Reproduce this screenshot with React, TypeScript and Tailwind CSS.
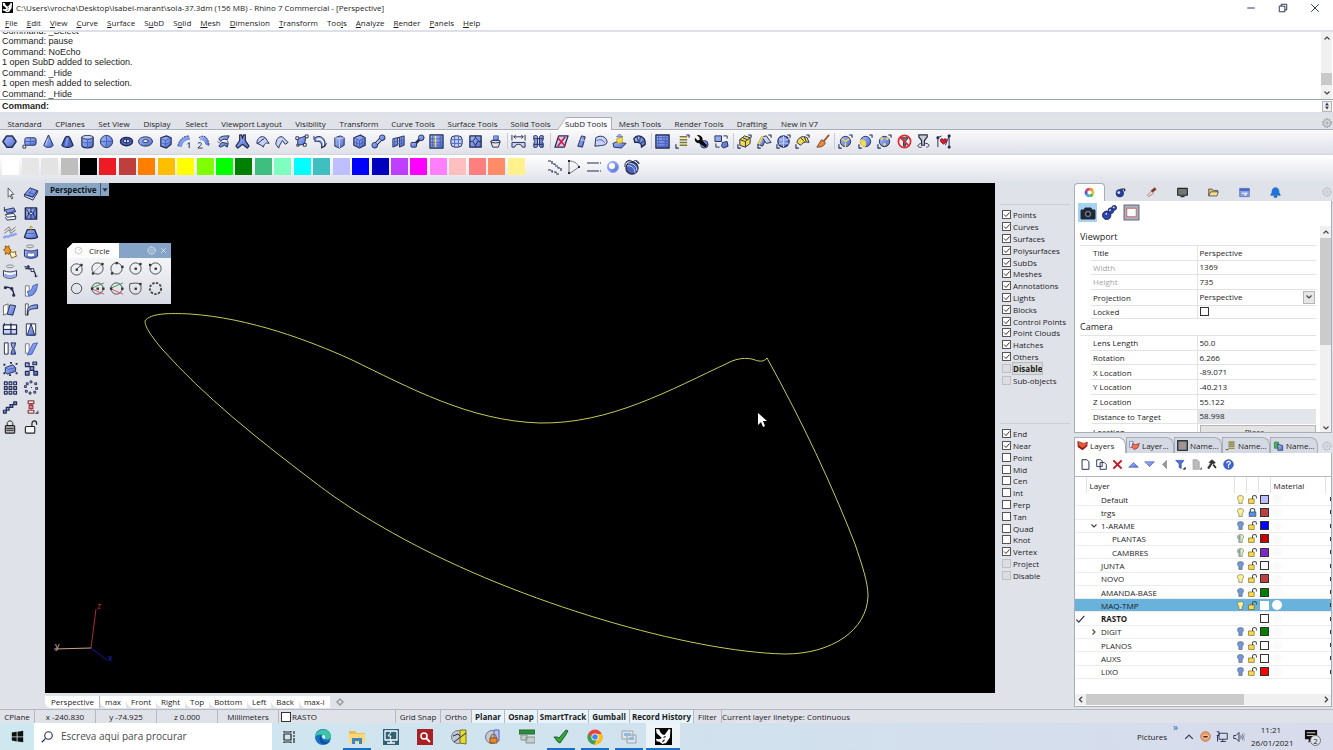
import React from "react";
import clsx from "clsx";

const B = "url(#steel)";
const L = "#c6d2fa";
const D = "#4a62bb";
const K = "#232c50";
const Y = "#f4dc4c";

interface IconProps {
  children: React.ReactNode;
  className?: string;
}

const SteelGradient = () => (
  <svg className="absolute size-0" aria-hidden="true">
    <defs>
      <linearGradient id="steel" x1="0" y1="0" x2="1" y2="1">
        <stop offset="0" stopColor="#a9bcf8" />
        <stop offset="0.5" stopColor="#7d97ea" />
        <stop offset="1" stopColor="#4e69cc" />
      </linearGradient>
    </defs>
  </svg>
);

const Icon: React.FC<IconProps> = ({ children, className }) => (
  <svg
    viewBox="0 0 16 16"
    className={clsx("shrink-0", className ?? "size-4")}
    fill="none"
    stroke={K}
    strokeWidth="1"
    strokeLinejoin="round"
    aria-hidden="true"
  >
    {children}
  </svg>
);

const corners = <path d="M1 11v4h3M12 1h3v3" strokeWidth="1.2" />;

const subdIcons: Record<string, React.ReactNode> = {
  face: <path d="M5 2h6l4 6-4 6H5L1 8z" fill={B} strokeWidth="1.6" />,
  plane: (
    <>
      <rect x="3" y="4" width="12" height="8" rx="2" fill={B} />
      <path d="M9 4v8M3 8h12" stroke={D} />
      <path d="M1 12h3v3H1z" fill="#fff" />
    </>
  ),
  cone: (
    <>
      <path d="M8 1l5 11c-1 3-9 3-10 0z" fill={B} />
      <path d="M7 5L5 12" stroke={L} />
    </>
  ),
  trunk: (
    <>
      <path d="M5.500 4c1-2 4-2 5 0L14 12c-2 3-10 3-12 0z" fill={D} strokeWidth="1.300" />
      <path d="M7 4l-2 9h4V4z" fill={B} stroke="none" />
    </>
  ),
  cylinder: (
    <>
      <path d="M2 3.500v9c1 3 11 3 12 0v-9z" fill={B} strokeWidth="1.300" />
      <ellipse cx="8" cy="3.500" rx="6" ry="2" fill={L} />
      <path d="M2 8c2 2 10 2 12 0M8 6v9" stroke={D} />
    </>
  ),
  sphere: (
    <>
      <circle cx="8" cy="8" r="6.500" fill={B} />
      <path d="M8 2v12M2 8h12" stroke={D} />
    </>
  ),
  ellipsoid: (
    <>
      <ellipse cx="8" cy="8" rx="6.500" ry="4.500" fill={D} strokeWidth="1.400" />
      <ellipse cx="8" cy="7.500" rx="3.500" ry="2" fill={L} />
      <path d="M8 5v5" />
    </>
  ),
  torus: (
    <>
      <ellipse cx="8" cy="8" rx="7.500" ry="5" fill={B} />
      <ellipse cx="8" cy="7.500" rx="3" ry="1.500" fill="#fff" />
    </>
  ),
  quadball: (
    <>
      <path d="M3 4l6-2 5 2v7l-5 4-6-2z" fill={B} strokeWidth="1.300" />
      <path d="M3 5l5 2 6-3M8 7v7M3 9l5 2 6-3" stroke={D} />
    </>
  ),
  sweep1: (
    <>
      <path d="M1 13C2 6 7 2 13 2l1 4C9 6 6 9 5 14" fill={B} stroke="none" />
      <path d="M1 13C2 6 7 2 13 2" strokeDasharray="2 1" />
      <path d="M11 11l2-2v6" />
    </>
  ),
  sweep2: (
    <>
      <path d="M4 4c5-4 9-1 10 9l-4-2C9 7 7 6 4 7" fill={B} stroke="none" />
      <path d="M3 4c5-4 10-1 11 8" strokeDasharray="2 1" />
      <path d="M2 10c3-2 5 0 3 2l-3 3h5" />
    </>
  ),
  loft: (
    <>
      <path d="M3 5c2-3 6-3 11-3l-2 4C8 5 6 6 5 8zM3 13l3-4 7 1-1 4-3-2-4 2z" fill={B} />
      <path d="M2 8l2 2m8-3l1 2" />
    </>
  ),
  multi: <path d="M5 1h2l1 4 1-4h2v6l4 6-2 2-5-4-5 4-2-2 4-6z" fill={B} strokeWidth="1.300" />,
  fill: (
    <>
      <path d="M2 10C2 4 7 1 11 4l4 6c-4-1-5 0-6 4-2-2-4-3-7-4z" fill={L} />
      <path d="M2 10c3 0 4-4 8-5" fill={B} />
    </>
  ),
  append: <path d="M2 11C2 6 5 2 9 3l6 6-3 2-3-4-3 5-1 3z" fill={L} />,
  quad: (
    <>
      <path d="M4 5l9-3-2 9-7 1z" fill={B} />
      <path d="M2 3h3v3H2zM12 1h3v3h-3zM10 10h3v3h-3zM3 11h2v2H3z" fill="#fff" />
    </>
  ),
  pipe: (
    <>
      <path d="M2 4c6-4 12 1 11 9l-4 2c1-6-2-8-7-7z" fill={B} />
      <path d="M4 6c4-2 8 1 7 7" stroke="#fff" strokeWidth="1.500" />
      <path d="M1 2v4M9 15l6-5" />
    </>
  ),
  box: (
    <>
      <path d="M3 4l6-2 4 2v8l-5 3-5-2z" fill={B} />
      <path d="M3 4l5 1 5-1M8 5v10" stroke={L} />
    </>
  ),
  boxgrid: (
    <>
      <path d="M2 4l7-3 5 3v8l-6 3-6-3z" fill={B} strokeWidth="1.300" />
      <path d="M2 4l6 3 6-3M8 7v8M2 8l6 3 6-3M5 6v7M11 6v7" stroke={D} />
    </>
  ),
  nodes: (
    <>
      <path d="M5 11l6-6" strokeWidth="4" />
      <circle cx="4" cy="12" r="3" fill={B} />
      <circle cx="12" cy="4" r="3" fill={B} />
      <path d="M6 10l4-4" stroke={L} strokeWidth="2" />
    </>
  ),
  wall: (
    <>
      <path d="M2 5l5-1v8l-5 2zM7 4l7-2v10l-5 2V4z" fill={B} />
      <path d="M2 9l12-3M4 5v8M11 3v10M2 12l12-3" stroke={D} />
    </>
  ),
  boxnodes: (
    <>
      <path d="M6 10l5-5" strokeWidth="3" />
      <rect x="1" y="9" width="6" height="5" rx="1" fill={B} />
      <circle cx="12" cy="4" r="3" fill={B} />
    </>
  ),
  mat: (
    <>
      <rect x="1" y="1" width="14" height="14" fill={B} strokeWidth="1.300" />
      <path d="M1 5h14M1 9h14M1 12h14M4 1v14M12 1v14" stroke={D} />
      <path d="M7 2v12" stroke={Y} strokeWidth="1.500" />
    </>
  ),
  roundgrid: (
    <>
      <rect x="2" y="2" width="12" height="12" rx="4" fill={L} />
      <path d="M6 2v12M10 2v12M2 6h12M2 10h12" stroke={D} />
    </>
  ),
  frame: (
    <>
      <rect x="2" y="2" width="12" height="12" fill={B} strokeWidth="1.400" />
      <path d="M8 4l3 3-3 5-3-4zM2 8h3M11 8h3M8 2v2M8 12v2" />
    </>
  ),
  bucket: (
    <>
      <path d="M3 8c1-2 9-2 10 0l-2 6H5z" fill="#e9e9ec" />
      <path d="M6 2h5v5H6z" fill={B} stroke={D} />
      <ellipse cx="8" cy="8" rx="5" ry="1.500" />
    </>
  ),
  bridge: (
    <>
      <path d="M1 1v6M15 1v6M3 3h10M5 1L3 3l2 2M11 1l2 2-2 2" />
      <path d="M1 9h14v5h-3c0-4-8-4-8 0H1z" fill={L} />
    </>
  ),
  stitch: (
    <>
      <path d="M3 2c3-1 4 0 4 2v8c0 2-1 3-4 2v-4l1-2-1-2zM13 2c-3-1-4 0-4 2v8c0 2 1 3 4 2v-4l-1-2 1-2z" fill={B} />
      <path d="M3 5h10M3 11h10" />
    </>
  ),
  crease: (
    <>
      <path d="M5 2h10l-4 12H1z" fill={L} strokeWidth="1.400" />
      <path d="M4 4l8 9M12 3L4 13" stroke="#dc1438" strokeWidth="1.800" />
    </>
  ),
  slab: (
    <>
      <path d="M8 2l4 1-3 11-5-1z" fill={B} />
      <path d="M7 6l5 1" stroke={L} />
    </>
  ),
  patch: (
    <>
      <path d="M3 4c4-3 11-2 12 4 0 4-3 4-13 5z" fill={L} />
      <path d="M4 7c5-2 7 0 9 3" stroke={D} />
    </>
  ),
  extrude: (
    <>
      <path d="M1 10l5-2 2 1 7 1-5 5-8-1z" fill={B} />
      <path d="M5 5l6-2v6l-5 1z" fill={Y} stroke="#c7a820" />
      <path d="M8 0l3 3H5z" fill={L} stroke={D} />
    </>
  ),
  bend: (
    <>
      <path d="M2 5c4-6 13-2 12 6l-4 3c1-4-3-6-7-5z" fill={B} strokeWidth="1.500" />
      <path d="M5 3l2 5M9 3l-1 5M13 7l-4 3" />
    </>
  ),
  grid: (
    <>
      <rect x="1" y="1" width="14" height="14" fill={B} strokeWidth="1.500" />
      <path d="M1 4h14M1 7h14M1 10h14M4 1v14M8 1c0 6 0 7 7 7M11 1v14M1 13h14" stroke={D} />
    </>
  ),
  list: (
    <>
      <path d="M5 3h8M5 6h8M5 9h8M5 12h8" stroke="#807825" strokeWidth="1.600" />
      {corners}
    </>
  ),
  wrench: (
    <>
      <circle cx="11" cy="11" r="4" fill={B} />
      <path d="M3 1l3 3v2L4 7 1 4c-1 5 3 6 5 6l6 4 2-2-5-5c1-4-2-6-6-6z" fill="#08090d" stroke="none" />
    </>
  ),
  convert: (
    <>
      <path d="M1 2h7v6H1zM9 9l5-1 1 5-5 2-2-2z" fill={B} />
      <path d="M10 2h4v3M2 10v4h4" />
    </>
  ),
  goldbox: (
    <>
      <path d="M3 6l5-4 6 2v6l-5 4-6-2z" fill={Y} />
      <path d="M3 6l6 2 5-4M9 8v6M6 4l5 2" />
      {corners}
    </>
  ),
  bicolor: (
    <>
      <path d="M1 11L5 3l5 1-4 9z" fill={B} />
      <path d="M5 3l5-1 5 7-5 1z" fill={L} />
      <path d="M6 2l-4 9" stroke={Y} strokeWidth="2" />
      {corners}
    </>
  ),
  ball: (
    <>
      <circle cx="8" cy="8" r="6" fill={B} strokeWidth="1.300" />
      <path d="M3 5c3 2 8 2 11 0M3 11c3-2 8-2 11 0M8 2v12" stroke={L} />
      {corners}
    </>
  ),
  goldarc: (
    <>
      <path d="M2 9c1-5 6-8 11-5l2 5c-4-1-7 0-9 3z" fill={Y} />
      <path d="M6 4l4 4M10 3l2 5" />
      {corners}
    </>
  ),
  broom: (
    <>
      <path d="M15 1L9 8" strokeWidth="2" stroke="#9d5528" />
      <path d="M7 6l4 3c-1 4-4 5-9 5z" fill="#e78b3f" stroke="#77401f" />
    </>
  ),
  tri1: (
    <>
      <circle cx="8" cy="8" r="5.500" fill={B} />
      <path d="M8 9v5M8 8L4 5M8 8l4-3" stroke={Y} strokeWidth="1.500" />
      {corners}
    </>
  ),
  tri2: (
    <>
      <circle cx="8" cy="8" r="5.500" fill={B} />
      <path d="M3 6l5 2v5c-4 1-6-3-5-7z" fill={Y} stroke={Y} />
      {corners}
    </>
  ),
  tri3: (
    <>
      <circle cx="8" cy="8" r="5.500" fill={B} />
      <circle cx="5" cy="5" r="1.500" fill={Y} stroke="none" />
      <circle cx="11" cy="5" r="1.500" fill={Y} stroke="none" />
      <circle cx="8" cy="11" r="1.500" fill={Y} stroke="none" />
      {corners}
    </>
  ),
  nofilter: (
    <>
      <path d="M4 4h8l-3 4v5H7V8z" fill="#777" />
      <circle cx="8" cy="8" r="6.500" stroke="#e02a2e" strokeWidth="1.800" />
      <path d="M3.500 3.500l9 9" stroke="#e02a2e" strokeWidth="1.800" />
    </>
  ),
  refilter: (
    <>
      <path d="M3 1h9v2L9 7v5H6V7L3 3z" fill="#ccc" strokeWidth="1.300" />
      <path d="M5 10c-5 2-3 5 1 4M10 10c5 0 5 4 1 4" />
    </>
  ),
  heart: (
    <>
      <path d="M2 14V4l4-2M14 2v12M10 12l4-10" />
      <path d="M8 11L5 8c-1-4 2-3 3-2 1-1 4-2 3 2z" fill="#d91a2c" stroke="#8e0f18" />
      <path d="M1 3h2v2H1zM13 13h2v2h-2zM13 1h2v2h-2z" fill={K} />
    </>
  ),
};

const subdGroups = [
  {
    width: "w-[505px]",
    tools: [
      "face", "plane", "cone", "trunk", "cylinder", "sphere", "ellipsoid", "torus", "quadball",
      "sweep1", "sweep2", "loft", "multi", "fill", "append", "quad", "pipe", "box", "boxgrid",
      "nodes", "wall", "boxnodes", "mat", "roundgrid", "frame", "bucket",
    ],
  },
  { width: "w-[39px]", tools: ["bridge", "stitch"] },
  { width: "w-[97px]", tools: ["crease", "slab", "patch", "extrude", "bend"] },
  { width: "w-[78px]", tools: ["grid", "list", "wrench", "convert"] },
  { width: "w-[97px]", tools: ["goldbox", "bicolor", "ball", "goldarc", "broom"] },
  { width: "w-[117px]", tools: ["tri1", "tri2", "tri3", "nofilter", "refilter", "heart"] },
];

const swatches = [
  "bg-white", "bg-[#e6e6e6]", "bg-[#e3e3e3]", "bg-[#bebebe]", "bg-black", "bg-[#ed1c24]",
  "bg-[#bf3f3f]", "bg-[#ff7f00]", "bg-[#ffbf00]", "bg-[#ffff00]", "bg-[#7fff00]", "bg-[#00ff00]",
  "bg-[#007f00]", "bg-[#3fbf7f]", "bg-[#7fffbf]", "bg-[#00ffff]", "bg-[#3fbfbf]", "bg-[#bfbfff]",
  "bg-[#0000ff]", "bg-[#0000bf]", "bg-[#bf3fff]", "bg-[#ff00ff]", "bg-[#ff7fff]", "bg-[#ffbfbf]",
  "bg-[#ff7f7f]", "bg-[#ff8c66]", "bg-[#fff28c]",
];

const menus: [string, string, string][] = [
  ["", "F", "ile"],
  ["", "E", "dit"],
  ["", "V", "iew"],
  ["", "C", "urve"],
  ["", "S", "urface"],
  ["S", "u", "bD"],
  ["S", "o", "lid"],
  ["", "M", "esh"],
  ["", "D", "imension"],
  ["", "T", "ransform"],
  ["Too", "l", "s"],
  ["", "A", "nalyze"],
  ["", "R", "ender"],
  ["", "P", "anels"],
  ["", "H", "elp"],
];

const history = [
  "Command: _Select",
  "Command: pause",
  "Command: NoEcho",
  "1 open SubD added to selection.",
  "Command: _Hide",
  "1 open mesh added to selection.",
  "Command: _Hide",
];

const toolTabs = [
  { label: "Standard", width: "w-[47px]" },
  { label: "CPlanes", width: "w-[44px]" },
  { label: "Set View", width: "w-[44px]" },
  { label: "Display", width: "w-[42px]" },
  { label: "Select", width: "w-[37px]" },
  { label: "Viewport Layout", width: "w-[73px]" },
  { label: "Visibility", width: "w-[45px]" },
  { label: "Transform", width: "w-[52px]" },
  { label: "Curve Tools", width: "w-[56px]" },
  { label: "Surface Tools", width: "w-[63px]" },
  { label: "Solid Tools", width: "w-[53px]" },
  { label: "SubD Tools", width: "w-[55px]" },
  { label: "Mesh Tools", width: "w-[56px]" },
  { label: "Render Tools", width: "w-[62px]" },
  { label: "Drafting", width: "w-[44px]" },
  { label: "New in V7", width: "w-[51px]" },
];

const RhinoMark = ({ className }: { className: string }) => (
  <Icon className={className}>
    <rect width="16" height="16" fill="#050505" stroke="none" />
    <path
      d="M1 1l3 .5 1 2.500 2 2 2 .5L13 1l1.500.5L14 9l-3.500 5-3.500 1-3-2-2.500-.5L1 10l3 .5 2.500-1L4 7 1.500 5z"
      fill="#fff"
      stroke="none"
    />
    <path d="M8 9l2-1M7 13l2-2" stroke="#050505" />
  </Icon>
);

const Gear = ({ className }: { className: string }) => (
  <Icon className={className}>
    <g stroke="currentColor">
      <circle cx="8" cy="8" r="5.500" />
      <circle cx="8" cy="8" r="2" />
      <circle cx="8" cy="8" r="7" strokeDasharray="2.400 2" strokeWidth="1.500" />
    </g>
  </Icon>
);

const Chevron = ({ turn, className }: { turn?: string; className?: string }) => (
  <Icon className={clsx(className ?? "size-2", turn)}>
    <path d="M3 5l5 5 5-5" stroke="#444" strokeWidth="2.200" />
  </Icon>
);

const TitleBar = () => (
  <header className="bg-white">
    <div className="flex h-[15px] items-center justify-between">
      <div className="flex items-center gap-[3px] pl-0.5">
        <RhinoMark className="size-[11px]" />
        <h1>C:\Users\vrocha\Desktop\isabel-marant\sola-37.3dm (156 MB) - Rhino 7 Commercial - [Perspective]</h1>
      </div>
      <div className="flex pr-0.5">
        <button aria-label="Minimize" className="flex w-8 justify-center">
          <Icon className="size-2.5">
            <path d="M2 8h12" strokeWidth="1.500" />
          </Icon>
        </button>
        <button aria-label="Restore" className="flex w-8 justify-center">
          <Icon className="size-2.5">
            <path d="M2 5h9v9H2zM5 5V2h9v9h-3" strokeWidth="1.500" />
          </Icon>
        </button>
        <button aria-label="Close" className="flex w-8 justify-center">
          <Icon className="size-2.5">
            <path d="M2 2l12 12M14 2L2 14" strokeWidth="1.500" />
          </Icon>
        </button>
      </div>
    </div>
    <nav className="flex h-[15px] items-center gap-[9px] pl-[5px]">
      {menus.map(([before, key, after]) => (
        <button key={before + key + after}>
          {before}
          <span className="underline underline-offset-1">{key}</span>
          {after}
        </button>
      ))}
    </nav>
  </header>
);

const CommandArea = () => (
  <section className="border-y-2 border-[#dde0e8] bg-white font-['Liberation_Sans',sans-serif] text-[9px]">
    <div className="flex h-[68px] border-b border-[#9aa8a8]">
      <div className="flex flex-1 flex-col justify-end overflow-hidden pl-0.5">
        <div className="flex h-[73px] shrink-0 flex-col">
          {history.map((line, i) => (
            <p key={i} className="flex-1 leading-[10px]">
              {line}
            </p>
          ))}
        </div>
      </div>
      <div className="mr-px flex w-[11px] flex-col items-center bg-[#f0f0f0] py-0.5">
        <Chevron turn="rotate-180" />
        <div className="mt-auto h-3 w-full bg-[#c9c9c9]" />
        <Chevron className="mt-1 size-2" />
      </div>
    </div>
    <div className="flex h-[12px] items-center pr-px pl-0.5">
      <label htmlFor="command" className="font-bold">
        Command:
      </label>
      <input id="command" className="h-3 flex-1 outline-none" />
      <div className="flex h-[11px] w-2.5 flex-col border border-[#b5b5b5] bg-[#eee]">
        <Icon className="h-1 w-2">
          <path d="M2 13h12L8 3z" fill={K} />
        </Icon>
        <Icon className="h-1 w-2">
          <path d="M2 3h12L8 13z" fill={K} />
        </Icon>
      </div>
    </div>
  </section>
);

const ToolTabs = () => (
  <nav className="flex h-[16px] items-end border-b border-[#a9adb6] pl-px whitespace-nowrap">
    {toolTabs.map((tab) =>
      tab.label === "SubD Tools" ? (
        <button
          key={tab.label}
          className={clsx(
            "-mb-px bg-[#a9adb6] pt-px pr-px [clip-path:polygon(9px_0,100%_0,100%_100%,0_100%)]",
            tab.width,
          )}
        >
          <span className="block bg-[#fafafc] pl-1 leading-3 [clip-path:polygon(9px_0,100%_0,100%_100%,1px_100%)]">
            {tab.label}
          </span>
        </button>
      ) : (
        <button key={tab.label} className={clsx("leading-[11px]", tab.width)}>
          {tab.label}
        </button>
      ),
    )}
    <button aria-label="Toolbar options" className="mr-px mb-px ml-auto text-[#85878c]">
      <Gear className="size-2.5" />
    </button>
  </nav>
);

const SubdToolbar = () => (
  <div className="flex h-[24px] items-center bg-linear-to-b from-[#fafafc] to-[#dfe1e9] pb-0.5">
    {subdGroups.map((group, i) => (
      <React.Fragment key={i}>
        {i > 0 && (
          <div className="flex h-4 w-1 justify-center">
            <div className="w-px bg-[#c9ccd5]" />
          </div>
        )}
        <div className={clsx("flex", group.width)}>
          {group.tools.map((tool) => (
            <button key={tool} aria-label={tool} className="flex flex-1 justify-center">
              <Icon className="size-[15px]">{subdIcons[tool]}</Icon>
            </button>
          ))}
        </div>
      </React.Fragment>
    ))}
  </div>
);

const colorTools: Record<string, React.ReactNode> = {
  steps: <path d="M1 2h4v3h3v2h3v2h3v3M1 11h4v2h4v2h4" strokeDasharray="3 1" strokeWidth="1.200" />,
  triangle: (
    <>
      <path d="M3 2c5 0 8 2 10 6l-10 7z" stroke="#777" />
      <path d="M2 1h2v2H2zM2 13h2v2H2zM12 7h2v2h-2z" fill={K} stroke="none" />
    </>
  ),
  lines: <path d="M1 4h14M1 12h14" strokeDasharray="12 1" />,
  pearl: (
    <>
      <circle cx="8" cy="8" r="5.500" fill={B} stroke="#8ea6f2" />
      <circle cx="7" cy="7" r="3" fill="#fff" stroke="none" />
    </>
  ),
  globe: (
    <>
      <circle cx="8" cy="9" r="6" fill={D} strokeWidth="1.400" />
      <path d="M3 7c4-1 8 2 8 7M4 4c4 0 9 2 9 8" stroke={L} />
      <path d="M1 8C0 2 6 0 9 3c2-3 6-1 6 2M2 3l4-2M12 2l3 3" />
    </>
  ),
};

const ColorBar = () => (
  <div className="flex h-[29px] items-center border-t border-[#d2d5de] bg-linear-to-b from-white to-[#dfe1e9] pb-[5px] pl-px">
    <div className="flex w-[525px]">
      {swatches.map((color) => (
        <button key={color} aria-label="Layer color" className="flex flex-1 justify-center">
          <span className={clsx("size-[17px]", color)} />
        </button>
      ))}
    </div>
    <div className="ml-[19px] flex w-[97px]">
      {Object.entries(colorTools).map(([name, art]) => (
        <button key={name} aria-label={name} className="flex flex-1 justify-center">
          <Icon className="size-4">{art}</Icon>
        </button>
      ))}
    </div>
  </div>
);

const sideIcons: React.ReactNode[] = [
  <path d="M6 2v10l2-2 2 4 1-1-2-4h3z" fill="#fff" stroke="#555" />,
  <>
    <path d="M1 9l6-7 8 3-5 7z" fill={B} />
    <path d="M4 6l8 3M9 3l-4 8" stroke={D} />
    <path d="M1 9v2l9 4 5-8V5l-5 7z" fill={L} />
  </>,
  <>
    <path d="M3 9l9-1 2 3-9 1zM3 12l2 3 9-1v-3" fill="#fff" />
    <path d="M3 4l9-2 2 4-9 2z" fill={B} />
    <path d="M2 1v5" />
  </>,
  <>
    <rect x="2" y="2" width="12" height="12" fill={B} strokeWidth="1.500" />
    <path d="M3 3l3 5-3 5M13 3l-3 5 3 5M8 2v12M5 8h6" />
    <circle cx="8" cy="8" r="1.500" fill="#fff" />
  </>,
  <>
    <path d="M2 6l5-4 2 4 5-4M2 9l5-4 2 4 5-4" stroke="#777" />
    <path d="M1 14c3-4 4 0 6-2s4 0 8-3" stroke="#8ea3ea" strokeWidth="2.500" />
  </>,
  <>
    <path d="M4 5h8l3 8c-3 2-11 2-14 0z" fill={B} strokeWidth="1.400" />
    <path d="M8 7V1M6 3l2-2 2 2" stroke="#b49a22" />
    <path d="M4 9h8" stroke={D} />
  </>,
  <>
    <path d="M3 2l2 1 2-1v3l2 1-1 2-1 3-2-1-2 1V8L1 6l2-1z" fill="#f09a1d" stroke="#8a5210" />
    <path d="M9 8l2 1 3-1v3l1 2-3 1-2 1-1-2-1-3z" fill="#fff5cf" stroke="#8a5210" />
  </>,
  <>
    <path d="M1 6c4 2 10 2 14 0v7c-4 3-10 3-14 0z" fill={B} />
    <path d="M4 9c2 1 6 1 8 0v4c-2 1-6 1-8 0z" fill="#fff" stroke={D} />
    <ellipse cx="7" cy="2.500" rx="4" ry="1.500" stroke="#888" />
  </>,
  <>
    <path d="M1 7c4 2 10 2 14 0v6c-4 3-10 3-14 0z" fill="#f2f5ff" />
    <path d="M2 11c4 3 8 3 12 0" stroke="#8ea3ea" strokeWidth="2.500" />
    <ellipse cx="8" cy="2.500" rx="4" ry="1.500" stroke="#888" />
  </>,
  <>
    <path d="M1 3h6M5 1v4M2 5c6-1 11 2 11 9" strokeWidth="1.400" />
    <path d="M8 5h3v3H8zM12 13h3" fill="#fff" />
  </>,
  <>
    <path d="M3 5c5-2 9 3 9 7" strokeWidth="1.500" />
    <path d="M2 4h2v2H2zM9 5h2v2H9zM11 12h2v2h-2z" fill={K} />
  </>,
  <>
    <path d="M2 3h4v11H2z" fill="#fff" stroke="#777" />
    <path d="M10 3l5-2c-1 8-3 12-9 13l-2-5c4 0 5-2 6-6z" fill={B} stroke={D} />
  </>,
  <>
    <path d="M1 4l5-2v10l-5 2z" fill="#fff" stroke="#666" />
    <path d="M8 3l6 1-3 10-6-1z" fill={B} />
  </>,
  <>
    <path d="M2 2h3v12H2z" fill="#fff" stroke="#555" />
    <path d="M4 14c0-6 4-7 11-7V3C8 3 5 5 4 9z" fill={B} />
  </>,
  <>
    <path d="M1 3h14v10H1zM1 8h14M9 3v10" fill={L} strokeWidth="1.300" />
    <path d="M2 4h6v3H2zM10 4h4v3h-4z" fill="#fff" stroke="none" />
    <path d="M2 1v3M9 1v3" />
  </>,
  <>
    <path d="M3 2h10v12H3z" fill="#fff" />
    <path d="M8 2l4 12H4z" fill={B} />
  </>,
  <>
    <path d="M2 2h4v12H2z" fill="#fff" />
    <path d="M9 2h5l-1 4-1 2 1 2 1 4H9l1-4 1-2-1-2z" fill={B} />
  </>,
  <>
    <path d="M2 3h4v10H2z" fill="#fff" stroke="#777" />
    <path d="M10 3l5-1-6 12-5 1z" fill={B} stroke={D} />
  </>,
  <>
    <path d="M3 7l8-3 3 3v4l-9 3-2-2z" fill={B} />
    <path d="M3 7l3 2 8-2" stroke={D} />
    <path d="M1 4h2M1 13h2M14 3h2M8 2h2M14 13h2M7 15h2" strokeWidth="2" />
  </>,
  <path d="M2 2h4v4H2zM7 6h4v4H7zM2 11h4v4H2zM11 11h4v4h-4zM10 1h4v3h-4z" fill={B} strokeWidth="1.200" />,
  <path
    d="M2 2h3v3H2zM7 2h3v3H7zM12 2h3v3h-3zM2 7h3v3H2zM7 7h3v3H7zM12 7h3v3h-3zM2 12h3v3H2zM7 12h3v3H7zM12 12h3v3h-3z"
    fill={L}
    strokeWidth="1.200"
  />,
  <path
    d="M7 1h2v2H7zM12 3h2v2h-2zM13 8h2v2h-2zM11 12h2v2h-2zM6 13h2v2H6zM2 11h2v2H2zM1 6h2v2H1zM3 3h2v2H3zM8 8h1"
    fill={L}
  />,
  <path d="M1 12h3v3H1zM4 9h3v3H4zM8 6h3v3H8zM12 3h3v3h-3z" fill={B} strokeWidth="1.300" />,
  <>
    <path d="M5 2h6v3H5zM6 7h4v3H6zM5 12h6v3H5z" fill="#fff" stroke="#8e3a44" strokeWidth="1.300" />
    <path d="M8 4v9M6 6h4" stroke="#c43a44" />
    <path d="M16 16v-4l-4 4z" fill="#555" stroke="none" />
  </>,
  <>
    <rect x="3" y="7" width="10" height="8" rx="1" fill="#b9b9b9" stroke="#222" strokeWidth="1.200" />
    <path d="M5 7V5c0-4 6-4 6 0v2M4 10h8M4 12h8" stroke="#222" />
  </>,
  <>
    <rect x="2" y="8" width="10" height="7" rx="1" fill="#f7f7f7" stroke="#222" strokeWidth="1.200" />
    <path d="M9 8V5c0-4 5-4 5 0v1" stroke="#222" strokeWidth="1.300" />
  </>,
];

const Sidebar = () => (
  <aside className="w-[45px] shrink-0 pr-1">
    <div className="grid h-[253px] grid-cols-2 items-center pt-px">
      {sideIcons.map((art, i) => (
        <button key={i} aria-label={`Tool ${i + 1}`} className="flex justify-center">
          <Icon className="h-[15px] w-4">{art}</Icon>
        </button>
      ))}
    </div>
  </aside>
);

const handle = (x: number, y: number) => (
  <rect x={x - 1} y={y - 1} width="2.500" height="2.500" fill="#333" stroke="none" />
);

const circleTools: React.ReactNode[] = [
  <>
    <circle cx="7" cy="9" r="6" />
    <path d="M7 9l5-5" />
    {handle(7, 9)}
    {handle(12, 4)}
  </>,
  <>
    <circle cx="8" cy="8" r="6" />
    <path d="M3 13L13 3" stroke="#aaa" />
    {handle(3, 13)}
    {handle(13, 3)}
  </>,
  <>
    <circle cx="8" cy="8" r="6" />
    {handle(8, 2)}
    {handle(14, 6)}
    {handle(3, 13)}
  </>,
  <>
    <circle cx="8" cy="8" r="6" />
    {handle(8, 8)}
    {handle(13, 3)}
  </>,
  <>
    <circle cx="8" cy="8" r="6" />
    {handle(8, 8)}
    {handle(2, 4)}
  </>,
  <circle cx="7" cy="8" r="5.500" />,
  <>
    <circle cx="8" cy="8" r="6" />
    <path d="M1 8L15 2" stroke="#3c9b4c" />
    <path d="M1 8l14 6" stroke="#e04a54" />
    {handle(8, 8)}
    {handle(2, 8)}
    {handle(14, 8)}
  </>,
  <>
    <circle cx="8" cy="8" r="6" />
    <path d="M1 8L15 2" stroke="#3c9b4c" />
    <path d="M1 8l14 6" stroke="#e04a54" />
    {handle(2, 8)}
    {handle(14, 8)}
  </>,
  <>
    <path d="M2 3c4-1 8-1 11 0 2 5 1 11-5 11S1 8 2 3z" />
    {handle(8, 8)}
    {handle(13, 3)}
  </>,
  <circle cx="8" cy="8" r="6" strokeDasharray="2.500 1.500" strokeWidth="2" />,
];

const CirclePalette = () => (
  <section className="absolute top-[60px] left-[22px] w-[104px] bg-linear-to-b from-[#fdfdfe] to-[#d9dce5] pb-2 [clip-path:polygon(6px_0,100%_0,100%_100%,0_100%,0_6px)]">
    <header className="flex h-[15px] items-center bg-[#85a4c8]">
      <div className="flex h-full w-[52px] items-center gap-1.5 bg-[#fdfdfe] pl-[7px]">
        <Icon className="size-[9px]">
          <g stroke="#aaa">
            <circle cx="8" cy="8" r="6" />
            <path d="M8 8l4-4" />
          </g>
        </Icon>
        Circle
      </div>
      <button aria-label="Palette options" className="ml-auto text-[#e6ebf2]">
        <Gear className="size-[9px]" />
      </button>
      <button aria-label="Close palette" className="px-1">
        <Icon className="size-[7px]">
          <path d="M3 3l10 10M13 3L3 13" stroke="#e6ebf2" strokeWidth="2" />
        </Icon>
      </button>
    </header>
    <div className="grid w-[98px] grid-cols-5 gap-y-[5px] pt-[3px] pl-px">
      {circleTools.map((art, i) => (
        <button key={i} aria-label={`Circle ${i + 1}`} className="flex justify-center">
          <Icon className="size-[15px]">
            <g stroke="#444">{art}</g>
          </Icon>
        </button>
      ))}
    </div>
  </section>
);

const Viewport = () => (
  <div className="relative min-h-0 flex-1 bg-black">
    <svg viewBox="0 0 950 510" className="size-full" fill="none" role="img" aria-label="Perspective viewport">
      <path
        d="M100 138C105 130 125 130 145 131C205 135 265 158 305 176C365 205 425 238 495 240C565 241 625 207 685 179C693 175 701 175 707 176C713 178 718 180 722 175C757 238 787 302 810 361C817 382 823 399 823 413C822 447 787 471 740 471C645 469 475 420 355 354C315 332 290 315 268 298C210 254 160 214 117 166C102 148 100 142 100 138Z"
        stroke="#c5ca58"
      />
      <path d="M46 465L51 426" stroke="#a52f31" />
      <path d="M9 466l37-1" stroke="#c7a58c" />
      <path d="M46 465l16 12" stroke="#15159a" />
      <path d="M713 230v12l3-3 2 5 2-1-2-5h4z" fill="#fff" />
      <g className="font-['Liberation_Sans',sans-serif] text-[9px]">
        <text x="52" y="426" fill="#a52f31">
          z
        </text>
        <text x="10" y="466" fill="#d3b29a">
          y
        </text>
        <text x="63" y="478" fill="#2020c0">
          x
        </text>
      </g>
    </svg>
    <div className="absolute top-0 left-0 flex h-[13px] items-center bg-[#8aa5c2] text-[#0c1620]">
      <span className="pr-1 pl-[5px] font-bold">Perspective</span>
      <button aria-label="Viewport menu" className="flex h-full items-center border-l border-[#47586b] px-px">
        <Icon className="size-[6px]">
          <path d="M2 4h12l-6 8z" fill={K} />
        </Icon>
      </button>
    </div>
    <CirclePalette />
  </div>
);

const viewTabs = ["Perspective", "max", "Front", "Right", "Top", "Bottom", "Left", "Back", "max-i"];

const ViewTabs = () => (
  <nav className="flex h-[16px] items-start pt-[3px]">
    {viewTabs.map((tab, i) => (
      <button
        key={tab}
        className={clsx(
          "h-3 bg-white px-[5px] leading-3",
          i === 0 ? "rounded-bl-md border-r border-[#b5b8c0] pl-1.5" : "rounded-bl-lg",
        )}
      >
        {tab}
      </button>
    ))}
    <button aria-label="New viewport" className="ml-1.5 pt-0.5">
      <Icon className="size-2">
        <path d="M6 2h4v4h4v4h-4v4H6v-4H2V6h4z" stroke="#777" strokeWidth="1.500" />
      </Icon>
    </button>
  </nav>
);

interface TickProps {
  label: string;
  checked?: boolean;
  disabled?: boolean;
  bold?: boolean;
}

const Tick: React.FC<TickProps> = ({ label, checked, disabled, bold }) => (
  <label className="flex flex-1 items-center gap-0.5">
    <span className="relative flex">
      <input
        type="checkbox"
        defaultChecked={checked}
        disabled={disabled}
        className={clsx(
          "peer size-[9px] appearance-none border",
          disabled ? "border-[#bfc1c6] bg-[#dcdde0]" : "border-[#555] bg-white",
        )}
      />
      <svg
        viewBox="0 0 9 9"
        className="pointer-events-none invisible absolute inset-0 peer-checked:visible"
        fill="none"
        stroke="#333"
      >
        <path d="M2 4.500l2 2L7.500 2.500" />
      </svg>
    </span>
    <span className={clsx("leading-[11px]", bold && "bg-[#d7dad9] font-bold outline outline-[#b9bcbd]")}>
      {label}
    </span>
  </label>
);

const filters = [
  "Points", "Curves", "Surfaces", "Polysurfaces", "SubDs", "Meshes", "Annotations", "Lights",
  "Blocks", "Control Points", "Point Clouds", "Hatches", "Others",
];
const snaps = ["End", "Near", "Point", "Mid", "Cen", "Int", "Perp", "Tan", "Quad", "Knot", "Vertex"];
const activeSnaps = ["End", "Near", "Vertex"];

const SnapPanel = () => (
  <aside className="w-[79px] shrink-0 pt-[21px] pr-1 pl-[5px]">
    <fieldset className="flex h-[182px] flex-col border-t border-[#cdd0d8] pt-1 pl-0.5">
      {filters.map((name) => (
        <Tick key={name} label={name} checked />
      ))}
      <Tick label="Disable" disabled bold />
      <Tick label="Sub-objects" disabled />
    </fieldset>
    <fieldset className="mt-[37px] flex h-[158px] flex-col border-t border-[#cdd0d8] pt-1 pl-0.5">
      {snaps.map((name) => (
        <Tick key={name} label={name} checked={activeSnaps.includes(name)} />
      ))}
      <Tick label="Project" disabled />
      <Tick label="Disable" disabled />
    </fieldset>
  </aside>
);

const panelTabs: React.ReactNode[] = [
  <g strokeWidth="4">
    <path d="M8 3a5 5 0 0 1 4.300 2.500" stroke="#f08a24" />
    <path d="M12.300 5.500a5 5 0 0 1 0 5" stroke="#e2c72c" />
    <path d="M12.300 10.500A5 5 0 0 1 8 13" stroke="#4fb94f" />
    <path d="M8 13a5 5 0 0 1-4.300-2.500" stroke="#2fa9d4" />
    <path d="M3.700 10.500a5 5 0 0 1 0-5" stroke="#5b4fd0" />
    <path d="M3.700 5.500A5 5 0 0 1 8 3" stroke="#e0356e" />
  </g>,
  <>
    <circle cx="7" cy="9" r="5.500" fill="#1f3fa5" />
    <circle cx="5.500" cy="8" r="2" fill="#dfe8ff" stroke="none" />
    <path d="M8 3h6v3" strokeWidth="2" />
  </>,
  <>
    <path d="M14 2L8 7" stroke="#7c3a2d" strokeWidth="4" />
    <path d="M8 6l3 3-7 5-2-2z" fill="#f2d9d3" stroke="#8e6258" />
  </>,
  <>
    <rect x="1" y="2" width="14" height="10" fill="#6e7b75" stroke="#222" strokeWidth="1.600" />
    <path d="M5 14h6" strokeWidth="1.800" />
  </>,
  <>
    <path d="M1 13V3h5l2 2h6v3" fill="#e8c457" />
    <path d="M1 13l3-6h11l-2 6z" fill="#fbe08a" />
  </>,
  <>
    <rect x="1" y="2" width="14" height="12" fill="#88a0e4" stroke={D} />
    <path d="M1 4h14" stroke={D} strokeWidth="3" />
    <path d="M4 9h4M9 8v5M12 8l-2 3" stroke="#fff" strokeWidth="1.500" />
  </>,
  <path d="M8 1c5 0 5 5 5 7l2 4H1l2-4c0-2 0-7 5-7zM6 13h4v2H6z" fill="#1c78dc" stroke="#175fae" />,
];

interface PropRow {
  name: string;
  value: string;
  dim?: boolean;
}

const viewportRows: PropRow[] = [
  { name: "Title", value: "Perspective" },
  { name: "Width", value: "1369", dim: true },
  { name: "Height", value: "735", dim: true },
  { name: "Projection", value: "Perspective" },
  { name: "Locked", value: "" },
];

const cameraRows: PropRow[] = [
  { name: "Lens Length", value: "50.0" },
  { name: "Rotation", value: "6.266" },
  { name: "X Location", value: "-89.071" },
  { name: "Y Location", value: "-40.213" },
  { name: "Z Location", value: "55.122" },
  { name: "Distance to Target", value: "58.998" },
  { name: "Location", value: "Place..." },
];

const PropTable = ({ title, rows, height }: { title: string; rows: PropRow[]; height: string }) => (
  <section className="pl-[5px]">
    <h2 className="h-[17px] border-b border-[#e3e3e3] text-[9px] leading-4">{title}</h2>
    <table className={clsx("w-full border-collapse", height)}>
      <tbody>
        {rows.map((row) => (
          <tr key={row.name}>
            <th className="w-[11px]" />
            <th
              scope="row"
              className={clsx(
                "w-[106px] border-r border-b border-[#e3e3e3] pl-0.5 text-left font-normal",
                row.dim && "text-[#a5a5a5]",
              )}
            >
              {row.name}
            </th>
            <td
              className={clsx(
                "border-b border-[#e3e3e3] pl-0.5 leading-3",
                row.name === "Distance to Target" && "bg-[#e3e5ec]",
              )}
            >
              {row.name === "Projection" ? (
                <div className="relative flex">
                  <select
                    aria-label="Projection"
                    defaultValue="Perspective"
                    className="h-[13px] w-full appearance-none outline-none"
                  >
                    <option>Perspective</option>
                    <option>Parallel</option>
                  </select>
                  <span className="pointer-events-none absolute top-0 right-px flex h-[13px] w-3 items-center justify-center border border-[#b4b4b4] bg-[#e6e6e6]">
                    <Chevron />
                  </span>
                </div>
              ) : row.name === "Locked" ? (
                <input
                  type="checkbox"
                  aria-label="Locked"
                  className="block size-[9px] appearance-none border border-[#333] bg-white"
                />
              ) : row.name === "Location" ? (
                <button className="block h-3 w-full border border-[#b4b4b4] bg-[#e4e4e4] text-center leading-[9px]">
                  {row.value}
                </button>
              ) : (
                row.value
              )}
            </td>
          </tr>
        ))}
      </tbody>
    </table>
  </section>
);

const PropertiesPanel = () => (
  <section className="flex h-[250px] flex-col border-b border-[#a9adb6]">
    <nav className="flex h-[18px] items-stretch">
      {panelTabs.map((art, i) => (
        <button
          key={i}
          aria-label={`Panel ${i + 1}`}
          className={clsx(
            "flex w-[31px] items-center justify-center",
            i === 0 && "rounded-t-sm border border-b-0 border-[#a9adb6] bg-white",
          )}
        >
          <Icon className="size-[11px]">{art}</Icon>
        </button>
      ))}
      <button aria-label="Panel options" className="ml-auto text-[#b4b7c0]">
        <Gear className="size-2.5" />
      </button>
    </nav>
    <div className="flex min-h-0 flex-1 flex-col border-x border-[#a9adb6] bg-white">
      <div className="flex items-center gap-[3px] pt-0.5 pl-[3px]">
        <button aria-label="Camera" className="flex size-[19px] items-center justify-center bg-[#a5d3f0]">
          <Icon className="size-4">
            <path d="M1 5h3l1-2h6l1 2h3v9H1z" fill="#22262a" />
            <circle cx="8" cy="9" r="3.500" fill="#7d8b96" />
            <circle cx="8" cy="9" r="1.500" fill="#111" />
          </Icon>
        </button>
        <button aria-label="Material" className="flex size-[19px] items-center justify-center">
          <Icon className="size-[15px]">
            <circle cx="5" cy="11" r="4.500" fill="#2b44b4" />
            <circle cx="9.500" cy="6" r="3" fill="#2b44b4" />
            <circle cx="13" cy="3" r="2.500" fill="#2b44b4" />
            <path d="M4 9l1 1M8 5l1 1M12 2l1 1" stroke="#dfe6ff" strokeWidth="2" />
          </Icon>
        </button>
        <button aria-label="Frame" className="flex size-[19px] items-center justify-center">
          <Icon className="size-[17px]">
            <rect x="1" y="1" width="14" height="14" fill="#aab0c0" stroke="#667" />
            <rect x="3.500" y="4" width="9" height="8" fill="#fff" stroke="#c96d6d" />
          </Icon>
        </button>
      </div>
      <div className="mt-1 flex min-h-0 flex-1">
        <div className="flex-1 overflow-hidden pt-[3px]">
          <PropTable title="Viewport" rows={viewportRows} height="h-[73px]" />
          <PropTable title="Camera" rows={cameraRows} height="h-[103px]" />
        </div>
        <div className="ml-1 flex w-[11px] flex-col items-center bg-[#f0f0f0]">
          <Chevron turn="rotate-180" className="my-0.5 size-2" />
          <div className="h-[107px] w-full bg-[#cbcbcb]" />
          <Chevron className="mt-auto size-2" />
        </div>
      </div>
    </div>
  </section>
);

const layerTabs: { label: string; art: React.ReactNode }[] = [
  {
    label: "Layers",
    art: (
      <>
        <path d="M1 4l8 4 6-4v5l-7 6-7-5z" fill="#8e1d14" stroke="none" />
        <path d="M1 2l9 3 5-2-1 5-6 4-6-4z" fill="#e8583a" stroke="#8e2214" />
      </>
    ),
  },
  {
    label: "Layer...",
    art: (
      <>
        <path d="M1 2h5v9H1z" fill="#fff" stroke={D} />
        <path d="M5 5l4 2 6-2-2 6-5 3-4-4z" fill="#e8765c" stroke="#8e2214" />
      </>
    ),
  },
  {
    label: "Name...",
    art: (
      <>
        <rect x="1" y="1" width="14" height="14" fill="#8f9799" stroke="#333" strokeWidth="2" />
        <path d="M8 3v10M3 8h10" stroke="#d98d85" />
      </>
    ),
  },
  {
    label: "Name...",
    art: <path d="M5 3h9M5 6h9M5 9h9M5 12h9M1 14h4" stroke="#7f7622" strokeWidth="1.800" />,
  },
  {
    label: "Name...",
    art: (
      <>
        <path d="M2 3h6v9H2z" fill="#43b05a" stroke="#2d7c3e" />
        <path d="M7 6l7 2v7H7z" fill={B} />
      </>
    ),
  },
];

const layerTools: React.ReactNode[] = [
  <path d="M3 1h7l3 3v11H3z" fill="#fff" strokeWidth="1.400" />,
  <path d="M1 1h6l2 2v8H1zM6 5h6l3 3v7H6z" fill="#fff" strokeWidth="1.300" />,
  <path d="M2 2l12 12M14 2L2 14" stroke="#c8141e" strokeWidth="2.800" />,
  <path d="M1 12l7-7 7 7z" fill={B} stroke={D} />,
  <path d="M1 4l7 7 7-7z" fill={B} stroke={D} />,
  <path d="M11 2v12L5 8z" fill="#999" stroke="#888" />,
  <>
    <path d="M1 2h12L9 7v7l-3-2V7z" fill="#4d72d8" stroke="#2847a0" />
    <path d="M12 15h3v-3z" fill={K} />
  </>,
  <>
    <path d="M3 1h6l3 3v11H3z" fill="#bbb" stroke="#999" />
    <path d="M13 15h3v-3z" fill="#777" stroke="#777" />
  </>,
  <>
    <path d="M3 5l4-4 5 4-2 2-2-1-5 8-2-1 5-8z" fill="#333" stroke="#222" />
    <path d="M9 8l4 5" stroke="#222" strokeWidth="2.500" />
  </>,
  <>
    <circle cx="8" cy="8" r="7" fill="#3b66d4" stroke="#2446a0" />
    <path d="M5.500 6c0-4 6-3 5 0-1 2-2.500 1-2.500 4M8 11v2" stroke="#fff" strokeWidth="1.700" />
  </>,
];

interface Layer {
  name: string;
  color: string;
  bulb: "on" | "off" | "half" | "";
  locked?: boolean;
  depth?: number;
  arrow?: "open" | "closed";
}

const layers: Layer[] = [
  { name: "Default", color: "bg-[#bfbfff]", bulb: "on" },
  { name: "trgs", color: "bg-[#bf3f3f]", bulb: "on", locked: true },
  { name: "1-ARAME", color: "bg-[#0000ff]", bulb: "off", arrow: "open" },
  { name: "PLANTAS", color: "bg-[#cc0000]", bulb: "half", depth: 1 },
  { name: "CAMBRES", color: "bg-[#7f26cc]", bulb: "half", depth: 1 },
  { name: "JUNTA", color: "bg-white", bulb: "off" },
  { name: "NOVO", color: "bg-[#bf3f3f]", bulb: "on" },
  { name: "AMANDA-BASE", color: "bg-[#007f00]", bulb: "off" },
  { name: "MAQ-TMP", color: "bg-white", bulb: "on" },
  { name: "RASTO", color: "bg-white", bulb: "" },
  { name: "DIGIT", color: "bg-[#007f00]", bulb: "off", arrow: "closed" },
  { name: "PLANOS", color: "bg-white", bulb: "off" },
  { name: "AUXS", color: "bg-white", bulb: "off" },
  { name: "LIXO", color: "bg-[#ff0000]", bulb: "off" },
];

const bulbFill = { on: "#fdf096", off: "#6f97e0", half: "#eef3a0" };

const LayerRow = ({ layer }: { layer: Layer }) => {
  const selected = layer.name === "MAQ-TMP";
  const current = layer.name === "RASTO";

  return (
    <tr className={clsx("border-b border-[#ededed]", selected && "bg-[#68b2dc]")}>
      <td>
        {current && (
          <Icon className="size-[10px]">
            <path d="M2 9l4 4 9-10" strokeWidth="1.800" />
          </Icon>
        )}
      </td>
      <td>
        <div className="flex items-center">
          <span className="flex w-[15px] justify-center">
            {layer.arrow && <Chevron turn={layer.arrow === "closed" ? "-rotate-90" : undefined} />}
          </span>
          <span className={clsx("leading-[11px]", layer.depth && "pl-[11px]", current && "font-bold")}>
            {layer.name}
          </span>
        </div>
      </td>
      <td>
        {layer.bulb && (
          <Icon className="mx-auto size-[9px]">
            <path d="M8 1c7 0 6 6 3 9v5H5v-5C2 7 1 1 8 1z" fill={bulbFill[layer.bulb]} stroke="#5a5a45" />
            {layer.bulb === "half" && <path d="M8 2C3 2 3 7 6 10v4h2z" fill="#6f97e0" stroke="none" />}
          </Icon>
        )}
      </td>
      <td>
        {layer.bulb &&
          (layer.locked ? (
            <Icon className="mx-auto size-[9px]">
              <rect x="2" y="7" width="12" height="8" fill="#5b8fe0" stroke="#234" />
              <path d="M4 7V4c0-4 8-4 8 0v3" stroke="#345" strokeWidth="1.800" />
            </Icon>
          ) : (
            <Icon className="mx-auto size-[9px]">
              <rect x="1" y="7" width="10" height="8" fill="#fbd94e" stroke="#5d4b10" />
              <path d="M8 7V4c0-4 7-4 7 0v2" stroke="#444" strokeWidth="1.800" />
            </Icon>
          ))}
      </td>
      <td>
        <span
          className={clsx("mx-auto block size-[9px] border", selected ? "border-white" : "border-[#333]", layer.color)}
        />
      </td>
      <td>
        <span
          className={clsx("ml-0.5 block size-[10px] rounded-full", selected ? "bg-white" : "bg-[#fafafa]")}
        />
      </td>
      <td>
        <span className="ml-auto block h-1 w-px bg-[#333]" />
      </td>
    </tr>
  );
};

const LayersPanel = () => (
  <section className="mt-1 flex min-h-0 flex-1 flex-col">
    <nav className="flex h-4 items-end">
      {layerTabs.map((tab, i) => (
        <button
          key={i}
          className={clsx(
            "flex h-4 items-center gap-0.5 rounded-tr-lg border border-b-0 border-[#a9adb6] pl-0.5",
            i === 0 ? "w-[52px] bg-white" : "w-12 bg-[#d5d9e3]",
          )}
        >
          <Icon className="size-[11px]">{tab.art}</Icon>
          {tab.label}
        </button>
      ))}
      <button aria-label="Panel options" className="mb-[2px] ml-auto text-[#b4b7c0]">
        <Gear className="size-2.5" />
      </button>
    </nav>
    <div className="flex min-h-0 flex-1 flex-col border-x border-b border-[#a9adb6] bg-white">
      <div className="flex h-[23px] w-[161px] items-center pl-[3px]">
        {layerTools.map((art, i) => (
          <button key={i} aria-label={`Layer tool ${i + 1}`} className="flex flex-1 justify-center">
            <Icon className="size-[11px]">{art}</Icon>
          </button>
        ))}
      </div>
      <div className="flex-1 overflow-hidden border-t border-[#b9bbc1]">
        <table className="h-[202px] w-full table-fixed border-collapse">
          <colgroup>
            <col className="w-[11px]" />
            <col />
            <col className="w-3" />
            <col className="w-3" />
            <col className="w-3" />
            <col className="w-[55px]" />
            <col className="w-1.5" />
          </colgroup>
          <thead>
            <tr className="h-[16px] text-left">
              <th className="border-r border-[#e3e3e3]" />
              <th className="border-r border-[#e3e3e3] pl-[3px] font-normal">Layer</th>
              <th className="border-r border-[#e3e3e3]" />
              <th className="border-r border-[#e3e3e3]" />
              <th className="border-r border-[#e3e3e3]" />
              <th className="border-r border-[#e3e3e3] pl-[3px] font-normal">Material</th>
              <th />
            </tr>
          </thead>
          <tbody>
            {layers.map((layer) => (
              <LayerRow key={layer.name} layer={layer} />
            ))}
          </tbody>
        </table>
      </div>
      <div className="mb-px flex h-[11px] items-center bg-[#f0f0f0]">
        <Chevron turn="rotate-90" className="mx-px size-[9px]" />
        <div className="h-full w-[158px] bg-[#cbcbcb]" />
        <Chevron turn="-rotate-90" className="ml-auto size-[9px]" />
      </div>
    </div>
  </section>
);

const modes = [
  { label: "Grid Snap", width: "w-[45px]" },
  { label: "Ortho", width: "w-[31px]" },
  { label: "Planar", width: "w-[33px]", on: true },
  { label: "Osnap", width: "w-[33px]", on: true },
  { label: "SmartTrack", width: "w-[51px]", on: true },
  { label: "Gumball", width: "w-[41px]", on: true },
  { label: "Record History", width: "w-[64px]", on: true },
  { label: "Filter", width: "w-[28px]" },
];

const StatusBar = () => (
  <footer className="flex h-[14px] items-stretch border-t border-[#b5b8c2] leading-3 whitespace-nowrap [&>*]:flex [&>*]:items-center [&>*]:justify-center">
    <button className="w-[34px]">CPlane</button>
    <span className="w-[61px] border-l border-[#b5b8c2]">x -240.830</span>
    <span className="w-[61px] border-l border-[#b5b8c2]">y -74.925</span>
    <span className="w-[61px] border-l border-[#b5b8c2]">z 0.000</span>
    <span className="w-[61px] border-l border-[#b5b8c2]">Millimeters</span>
    <button className="w-[117px] gap-px border-l border-[#b5b8c2] pl-0.5 !justify-start">
      <span className="size-2.5 border border-[#333] bg-white" />
      RASTO
    </button>
    {modes.map((mode) => (
      <button
        key={mode.label}
        className={clsx("border-l border-[#b5b8c2]", mode.width, mode.on && "bg-[#e9f3fa] font-bold")}
      >
        {mode.label}
      </button>
    ))}
    <span className="border-l border-[#b5b8c2]">Current layer linetype: Continuous</span>
  </footer>
);

interface TaskApp {
  name: string;
  art: React.ReactNode;
  open?: boolean;
}

const taskApps: TaskApp[] = [
  {
    name: "Task view",
    art: <path d="M3 5h7v6H3zM3 2v1h7V2M3 14v-1h7v1M13 2v3M13 9v5M13 6v2" stroke="#222" strokeWidth="1.200" />,
  },
  {
    name: "Edge",
    art: (
      <g stroke="none">
        <circle cx="8" cy="8" r="8" fill="#1670c4" />
        <path d="M0 8C1-1 15-2 16 7c0 4-4 4-6 3 1-4-6-7-10-2z" fill="#3cc6a4" />
        <path d="M6 7c-3 3-1 8 4 8 2 0 4-1 5-3-4 2-9 1-9-5z" fill="#0f4f9c" />
        <path d="M7 7c1-2 4-1 3 3-2 0-3-1-3-3z" fill="#e6f3fa" />
      </g>
    ),
  },
  {
    name: "Explorer",
    open: true,
    art: (
      <g stroke="none">
        <path d="M0 2h6l2 2h8v10H0z" fill="#f0bd48" />
        <path d="M0 5h16v9H0z" fill="#fbd977" />
        <path d="M3 15V9h10v6h-3v-3H6v3z" fill="#3f87c4" />
      </g>
    ),
  },
  {
    name: "Monitor",
    art: (
      <>
        <rect x="0" y="0" width="16" height="16" fill="#2f6274" stroke="none" />
        <path d="M2 2h12v9H2zM8 11v3M4 14h8" stroke="#fff" strokeWidth="1.300" />
        <path d="M8 3L5 7h3l-1 3" stroke="#fff" />
      </>
    ),
  },
  {
    name: "Search tool",
    art: (
      <>
        <rect x="0" y="0" width="16" height="16" fill="#a81f24" stroke="none" />
        <circle cx="7" cy="7" r="3" stroke="#fff" strokeWidth="1.500" />
        <path d="M9 9l4 4" stroke="#fff" strokeWidth="1.800" />
      </>
    ),
  },
  {
    name: "Modeler",
    art: (
      <>
        <circle cx="7" cy="8" r="6.500" fill="#c3c8d2" stroke="#778" />
        <path d="M9 1h6v14l-6-1z" fill="#e6dc30" stroke="#777317" />
        <path d="M2 7l5-2 2 2M3 13l12-9" />
      </>
    ),
  },
  {
    name: "Secure modeler",
    art: (
      <>
        <circle cx="7" cy="8" r="6.500" fill="#c3c8d2" stroke="#778" />
        <path d="M9 1h5v11H9z" fill="#b9c4f4" stroke={D} />
        <path d="M5 9h7v5H5z" fill="#e88a2c" stroke="#8e4d10" />
        <path d="M6 9V7c0-2 5-2 5 0v2" stroke="#8e4d10" />
      </>
    ),
  },
  {
    name: "Spreadsheet",
    art: (
      <>
        <path d="M0 1h16v4H0z" fill="#2e8c3e" stroke="#226b2f" />
        <path d="M2 6h6v5H2zM7 8h9v6H7z" fill="#c5cdc9" stroke="#8a928f" />
      </>
    ),
  },
  {
    name: "Checker",
    open: true,
    art: <path d="M1 8h3l2 1 7-8 2 1-3 5-5 7-2-1z" fill="#36a63b" stroke="#1d5e27" />,
  },
  {
    name: "Chrome",
    open: true,
    art: (
      <g stroke="none">
        <circle cx="8" cy="8" r="7.500" fill="#e9453a" />
        <path d="M1.500 4.200A7.500 7.500 0 0 0 7 15.400L10.500 10 5 9z" fill="#34a352" />
        <path d="M7 15.400A7.500 7.500 0 0 0 14.900 5H8l3 4z" fill="#fbc216" />
        <circle cx="8" cy="8" r="3.600" fill="#fff" />
        <circle cx="8" cy="8" r="2.800" fill="#4285f4" />
      </g>
    ),
  },
  {
    name: "Remote",
    open: true,
    art: (
      <>
        <path d="M1 2h11v8H1zM6 6h9v8H6z" fill="#dfe5ea" stroke="#9aa3ab" />
        <path d="M3 4h7v3H3zM8 8h5v3H8z" fill="#94b9da" stroke="none" />
      </>
    ),
  },
];

const Taskbar = () => (
  <div className="flex h-[27px] items-stretch bg-linear-to-r from-[#cfe8f0] via-[#d0e2ee] to-[#d8dbeb]">
    <button aria-label="Start" className="flex w-[34px] items-center justify-center">
      <Icon className="size-[13px]">
        <path d="M1 3l6-1v6H1zM8 2l7-1v7H8zM1 9h6v5l-6-1zM8 9h7v6l-7-1z" fill="#111" stroke="none" />
      </Icon>
    </button>
    <label className="flex w-[238px] items-center gap-2 bg-white pl-[7px]">
      <Icon className="size-3">
        <circle cx="10" cy="6" r="5" strokeWidth="1.500" />
        <path d="M6 10l-5 5" strokeWidth="1.500" />
      </Icon>
      <input
        aria-label="Search"
        placeholder="Escreva aqui para procurar"
        className="min-w-0 flex-1 text-[10px] outline-none placeholder:text-[#4a4a4a]"
      />
    </label>
    {taskApps.map((app) => (
      <button
        key={app.name}
        aria-label={app.name}
        className="flex w-[34px] flex-col items-center justify-end"
      >
        <Icon className="my-auto size-4">{app.art}</Icon>
        <span className={clsx("-mt-0.5 h-0.5 w-7", app.open && "bg-[#1a70c4]")} />
      </button>
    ))}
    <button aria-label="Rhino 7" className="flex w-[34px] flex-col items-center justify-end bg-[#edf4f8]">
      <RhinoMark className="my-auto size-[17px]" />
      <span className="-mt-0.5 h-0.5 w-full bg-[#1a70c4]" />
    </button>
    <div className="ml-auto flex items-center pr-3 text-[#222]">
      <span className="-mt-px">Pictures</span>
      <span className="mr-1.5 ml-1.5 self-start text-[10px] leading-2 text-[#3a5fb5]">»</span>
      <Icon className="mr-1.5 size-2.5">
        <path d="M2 11l6-6 6 6" strokeWidth="1.700" />
      </Icon>
      <Icon className="mr-[5px] size-[11px]">
        <circle cx="8" cy="8" r="7" fill="#eba068" stroke="#b5602c" />
        <path d="M3 8c3-2 7-2 10 0-3 3-7 3-10 0z" fill="#5a1e10" stroke="#fff" />
      </Icon>
      <Icon className="mr-[5px] size-3">
        <path d="M4 3h11v8H4zM1 1h3v5H1M2 6v8M6 14h7M9 11v3" strokeWidth="1.200" />
      </Icon>
      <Icon className="mr-1.5 size-3">
        <path d="M1 6h3l4-4v12l-4-4H1z" strokeWidth="1.200" />
        <path d="M10 6c1 1 1 3 0 4M12 4c2 2 2 6 0 8" />
        <path d="M14 2c3 3 3 9 0 12" stroke="#999" />
      </Icon>
      <time className="w-10 self-start text-center leading-[13px]">
        11:21
        <br />
        26/01/2021
      </time>
      <button aria-label="Notifications" className="relative mr-0.5 ml-[13px] flex">
        <Icon className="size-[15px]">
          <path d="M1 1h13v10H8l-3 4v-4H1z" fill="#111" stroke="none" />
          <path d="M3 4h9M3 7h9" stroke="#ddd" />
        </Icon>
        <span className="absolute top-[6px] left-[6px] flex size-[11px] items-center justify-center rounded-full border border-[#777] bg-[#dfe3ec]">
          2
        </span>
      </button>
    </div>
  </div>
);

export default function App() {
  return (
    <div className="flex h-screen flex-col overflow-hidden bg-[#e0e2ea] font-['Open_Sans','Noto_Sans',sans-serif] text-[8px] leading-[11px] text-[#1c1c1c]">
      <SteelGradient />
      <TitleBar />
      <CommandArea />
      <ToolTabs />
      <SubdToolbar />
      <ColorBar />
      <main className="flex min-h-0 flex-1">
        <Sidebar />
        <div className="flex min-w-0 flex-1 flex-col">
          <Viewport />
          <ViewTabs />
        </div>
        <SnapPanel />
        <div className="flex w-[259px] shrink-0 flex-col pr-px pb-0.5">
          <PropertiesPanel />
          <LayersPanel />
        </div>
      </main>
      <StatusBar />
      <Taskbar />
    </div>
  );
}
